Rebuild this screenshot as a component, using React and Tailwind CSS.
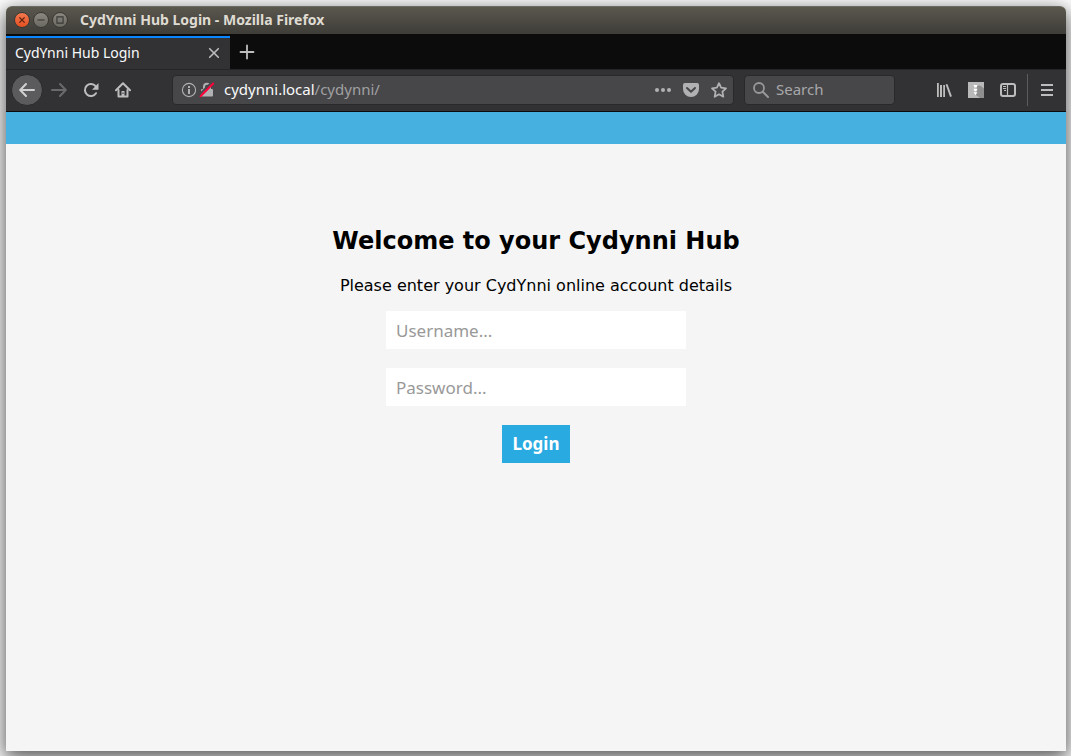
const stroke = {
  fill: 'none',
  stroke: 'currentColor',
  strokeWidth: 2,
  strokeLinecap: 'round',
  strokeLinejoin: 'round',
};

function Icon({ children, className = 'size-4' }) {
  return (
    <svg viewBox="0 0 16 16" className={`${className} shrink-0`} aria-hidden="true">
      {children}
    </svg>
  );
}

function ToolButton({ label, children, className = 'text-[#bdbdbe]' }) {
  return (
    <button type="button" aria-label={label} className={`flex h-8 w-8 shrink-0 items-center justify-center ${className}`}>
      {children}
    </button>
  );
}

function WindowButton({ label, className, children }) {
  return (
    <button
      type="button"
      aria-label={label}
      className={`flex size-4 items-center justify-center rounded-full border border-[#3a3934] ${className}`}
    >
      {children}
    </button>
  );
}

function TitleBar() {
  return (
    <header className="flex h-7 items-center rounded-t-md border-t border-[#6b6a62] bg-linear-to-b from-[#5a574e] to-[#3e3d38] pb-px pl-2">
      <div className="flex gap-[3px]">
        <WindowButton label="Close" className="bg-linear-to-b from-[#f4784f] to-[#e2501f] text-[#5b2410]">
          <Icon className="size-3.5">
            <path d="M5 5l6 6M11 5l-6 6" fill="none" stroke="currentColor" strokeWidth="1.6" />
          </Icon>
        </WindowButton>
        <WindowButton label="Minimize" className="bg-linear-to-b from-[#8a8880] to-[#6a6962] text-[#3a3934]">
          <Icon className="size-3.5">
            <path d="M4 8h8" fill="none" stroke="currentColor" strokeWidth="1.3" />
          </Icon>
        </WindowButton>
        <WindowButton label="Maximize" className="bg-linear-to-b from-[#8a8880] to-[#6a6962] text-[#3a3934]">
          <Icon className="size-3.5">
            <path d="M4.5 4.5h7v7h-7z" fill="none" stroke="currentColor" strokeWidth="1.3" />
          </Icon>
        </WindowButton>
      </div>
      <span className="ml-3 text-sm font-bold text-[#dfdbd2]">CydYnni Hub Login - Mozilla Firefox</span>
    </header>
  );
}

function TabStrip() {
  return (
    <div className="flex h-[35px] border-t border-[#0c0c0d] bg-[#0c0c0d]">
      <div className="mt-px flex w-56 items-center justify-between border-t-2 border-[#0a84ff] bg-[#323234] pr-2 pb-0.5 pl-[9px]">
        <span className="text-sm text-[#f9f9fa]">CydYnni Hub Login</span>
        <button type="button" aria-label="Close tab" className="text-[#bdbdbe]">
          <Icon>
            <path d="M3.7 3.7l8.6 8.6M12.3 3.7l-8.6 8.6" {...stroke} strokeWidth="1.6" />
          </Icon>
        </button>
      </div>
      <button type="button" aria-label="New tab" className="ml-[9px] text-[#bdbdbe]">
        <Icon>
          <path d="M8 1.5v13M1.5 8h13" {...stroke} strokeWidth="1.8" />
        </Icon>
      </button>
    </div>
  );
}

function AddressBar() {
  return (
    <div className="flex h-[30px] min-w-0 flex-1 items-center rounded-[4px] border border-[#29292b] bg-[#474749] pr-1.5 pl-2 text-[#b1b1b3]">
      <Icon>
        <circle cx="8" cy="8" r="6.6" fill="none" stroke="currentColor" strokeWidth="1.1" />
        <path d="M7 7h2v5H7zM7 4h2v2H7z" fill="currentColor" />
      </Icon>
      <Icon className="ml-0.5 size-4">
        <path d="M3 7h10a1 1 0 0 1 1 1v5.500a1 1 0 0 1-1 1H3a1 1 0 0 1-1-1V8a1 1 0 0 1 1-1z" fill="currentColor" />
        <path d="M5 8V4.800a3 3 0 0 1 6 0V8" fill="none" stroke="currentColor" strokeWidth="2" />
        <path d="M0.300 12.700L12.800 0.200" fill="none" stroke="#474749" strokeWidth="2" />
        <path d="M1.500 14.200L14.200 1.500" fill="none" stroke="#ff0039" strokeWidth="2" strokeLinecap="round" />
      </Icon>
      <a href="#" className="ml-[9px] min-w-0 flex-1 truncate text-[15px] text-[#a0a0a2]">
        <span className="text-[#f9f9fa]">cydynni.local</span>/cydynni/
      </a>
      <div className="flex gap-3">
        <button type="button" aria-label="Page actions">
          <Icon>
            <circle cx="2" cy="8" r="2" fill="currentColor" />
            <circle cx="8" cy="8" r="2" fill="currentColor" />
            <circle cx="14" cy="8" r="2" fill="currentColor" />
          </Icon>
        </button>
        <button type="button" aria-label="Save to Pocket">
          <Icon>
            <path d="M2 1h12a2 2 0 0 1 2 2v4a8 8 0 0 1-16 0V3a2 2 0 0 1 2-2z" fill="currentColor" />
            <path d="M4 6l4 3.800L12 6" {...stroke} stroke="#474749" />
          </Icon>
        </button>
        <button type="button" aria-label="Bookmark this page">
          <Icon>
            <path d="M8 1.200l2.100 4.500 4.900.6-3.600 3.400.9 5L8 12.300l-4.300 2.400.9-5L1 6.300l4.900-.6z" {...stroke} strokeWidth="1.800" />
          </Icon>
        </button>
      </div>
    </div>
  );
}

function NavBar() {
  return (
    <nav className="flex h-[43px] items-center border-t border-b border-t-[#252526] border-b-[#0c0c0d] bg-[#323234] pr-[3px] pb-0.5 pl-[5px]">
      <button
        type="button"
        aria-label="Back"
        className="flex size-8 shrink-0 items-center justify-center rounded-full border border-[#29292b] bg-[#5b5b5d] text-[#d0d0d1]"
      >
        <Icon>
          <path d="M15 8H1.500M7 2L1.200 8 7 14" {...stroke} />
        </Icon>
      </button>
      <ToolButton label="Forward" className="text-[#6a6a6c]">
        <Icon>
          <path d="M1 8h13.500M9 2l5.800 6L9 14" {...stroke} />
        </Icon>
      </ToolButton>
      <ToolButton label="Reload">
        <Icon>
          <path d="M13 11.200A6 6 0 1 1 12.600 4.200" {...stroke} />
          <path d="M15.500 1v6.200a.5.5 0 0 1-.5.500H9z" fill="currentColor" />
        </Icon>
      </ToolButton>
      <ToolButton label="Home">
        <Icon>
          <path d="M1 8.300L8 1.300l7 7" {...stroke} />
          <path d="M3.500 8v6.500h9V8" {...stroke} />
          <path d="M6.500 9h3v5.500h-3z" fill="currentColor" />
          <path d="M8 10.500v1.500" stroke="#323234" strokeWidth="1" />
        </Icon>
      </ToolButton>
      <div className="w-[33px] shrink-0" />
      <AddressBar />
      <label className="ml-2.5 flex h-[30px] w-[151px] shrink-0 items-center rounded-[4px] border border-[#29292b] bg-[#474749] pr-2 pl-2 text-[#98989a]">
        <Icon>
          <circle cx="6" cy="6" r="5" {...stroke} strokeWidth="1.800" />
          <path d="M9.800 9.800L15 15" {...stroke} />
        </Icon>
        <input
          type="search"
          aria-label="Search"
          placeholder="Search"
          className="ml-[7px] w-full min-w-0 bg-transparent text-[15px] text-[#f9f9fa] outline-none placeholder:text-[#a8a8aa]"
        />
      </label>
      <div className="w-[33px] shrink-0" />
      <ToolButton label="Library">
        <Icon>
          <path d="M1 1h1.800v14H1zM4 3h2v12H4zM7.200 3H9v12H7.200z" fill="currentColor" />
          <path d="M10.500 2.200L15 14.600" fill="none" stroke="currentColor" strokeWidth="1.900" />
        </Icon>
      </ToolButton>
      <ToolButton label="Archive extension">
        <Icon>
          <path d="M0 0h16v16H0z" fill="#b9b9ba" />
          <path d="M9 3.500h3l4 3V16h-4l-4-3z" fill="#8f8f90" />
          <path d="M5.500 3h4L8.500 5.500h-2zM5.500 6.700h4L8.500 9.200h-2zM5.500 10.300h4L7.500 13z" fill="#ffffff" />
        </Icon>
      </ToolButton>
      <ToolButton label="Sidebars">
        <Icon>
          <rect x="1" y="2" width="14" height="12" rx="2" fill="none" stroke="currentColor" strokeWidth="2" />
          <path d="M7.500 2v12" stroke="currentColor" strokeWidth="1.200" />
          <path d="M3 4.500h3M3 6.500h3M4 8.500h2" stroke="currentColor" strokeWidth="1" />
        </Icon>
      </ToolButton>
      <div className="mx-[3px] h-8 w-px shrink-0 bg-[#5c5c5e]" />
      <ToolButton label="Open menu">
        <Icon>
          <path d="M2 3h12M2 8h12M2 13h12" fill="none" stroke="currentColor" strokeWidth="2" />
        </Icon>
      </ToolButton>
    </nav>
  );
}

function LoginPage() {
  const field =
    'h-[38px] w-full bg-white px-2.5 text-[17px] text-black outline-none placeholder:text-[#999999]';
  return (
    <div className="flex flex-1 flex-col bg-[#f5f5f5]">
      <div className="h-8 bg-[#46b1e1]" />
      <main className="flex flex-col items-center px-4 pt-[81px] pb-8 text-center">
        <h1 className="font-['DejaVu_Sans',sans-serif] text-2xl font-bold text-black">Welcome to your Cydynni Hub</h1>
        <p className="mt-[17px] font-['DejaVu_Sans',sans-serif] text-base text-black">
          Please enter your CydYnni online account details
        </p>
        <form className="mt-[13px] flex w-full max-w-[300px] flex-col items-center gap-[19px]">
          <input type="text" aria-label="Username" placeholder="Username..." className={field} />
          <input type="password" aria-label="Password" placeholder="Password..." className={field} />
          <button type="button" className="h-[38px] min-w-[68px] bg-[#29abe2] px-2 text-[17px] font-bold text-white">
            Login
          </button>
        </form>
      </main>
    </div>
  );
}

export default function App() {
  return (
    <div className="flex min-h-screen flex-col overflow-hidden bg-white pt-1.5 pr-[5px] pb-[5px] pl-1.5 font-['Noto_Sans',sans-serif]">
      <div className="flex flex-1 flex-col rounded-t-md shadow-[0_6px_20px_2px_rgba(0,0,0,0.65)]">
        <TitleBar />
        <TabStrip />
        <NavBar />
        <LoginPage />
      </div>
    </div>
  );
}
